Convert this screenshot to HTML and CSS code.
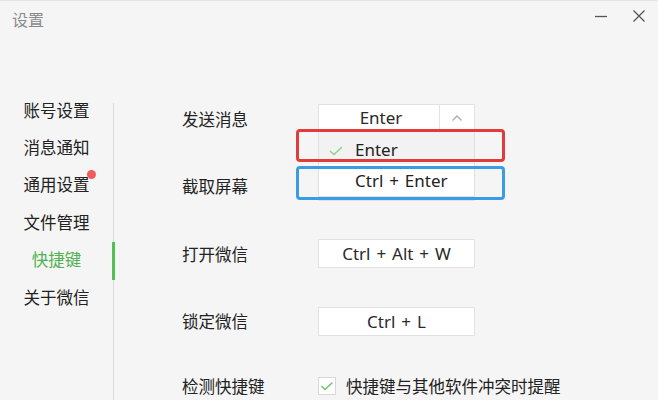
FILE: index.html
```html
<!DOCTYPE html>
<html lang="zh-CN">
<head>
<meta charset="utf-8">
<title>设置</title>
<link rel="stylesheet" href="styles.css">
</head>
<body>
<div class="window">
  <header class="titlebar">
    <div class="title">设置</div>
    <div class="controls">
      <svg class="ctl" width="14" height="14" viewBox="0 0 14 14"><path d="M1 7.5H13" stroke="#555" stroke-width="1.3"/></svg>
      <svg class="ctl" width="14" height="14" viewBox="0 0 14 14"><path d="M1.5 1.5L12.5 12.5M12.5 1.5L1.5 12.5" stroke="#555" stroke-width="1.3"/></svg>
    </div>
  </header>
  <div class="main">
    <nav class="sidebar">
      <div class="nav-item"><span>账号设置</span></div>
      <div class="nav-item"><span>消息通知</span></div>
      <div class="nav-item"><span class="has-dot">通用设置<i class="dot"></i></span></div>
      <div class="nav-item"><span>文件管理</span></div>
      <div class="nav-item active"><span>快捷键</span></div>
      <div class="nav-item"><span>关于微信</span></div>
    </nav>
    <div class="divider"></div>
    <section class="content">
      <div class="row">
        <div class="label">发送消息</div>
        <div class="select">
          <div class="select-value">Enter</div>
          <div class="select-arrow">
            <svg width="12" height="8" viewBox="0 0 12 8"><path d="M1.5 6.5L6 2L10.5 6.5" fill="none" stroke="#aaa" stroke-width="1.3"/></svg>
          </div>
          <div class="dropdown">
            <div class="option selected">
              <svg class="opt-check" width="14" height="10" viewBox="0 0 14 10"><path d="M1 5L5 8.5L13 1" fill="none" stroke="#8ccf8c" stroke-width="1.3"/></svg>
              <span>Enter</span>
            </div>
            <div class="option"><span>Ctrl + Enter</span></div>
          </div>
          <div class="mark mark-red"></div>
          <div class="mark mark-blue"></div>
        </div>
      </div>
      <div class="row">
        <div class="label">截取屏幕</div>
        <div class="keybox"></div>
      </div>
      <div class="row">
        <div class="label">打开微信</div>
        <div class="keybox">Ctrl + Alt + W</div>
      </div>
      <div class="row">
        <div class="label">锁定微信</div>
        <div class="keybox">Ctrl + L</div>
      </div>
      <div class="row row-check">
        <div class="label">检测快捷键</div>
        <div class="check-wrap">
          <span class="checkbox">
            <svg width="14" height="10" viewBox="0 0 14 10"><path d="M1.5 5L5 8.5L12.5 1.5" fill="none" stroke="#6cc36c" stroke-width="1.4"/></svg>
          </span>
          <span class="check-text">快捷键与其他软件冲突时提醒</span>
        </div>
      </div>
    </section>
  </div>
</div>
</body>
</html>
```
FILE: styles.css
```css
* { box-sizing: border-box; }
html, body { margin: 0; padding: 0; }
body {
  background: #f5f5f5;
  font-family: "Noto Sans", "Noto Sans CJK SC", sans-serif;
  color: #333;
  width: 658px;
  height: 400px;
  overflow: hidden;
}
.window {
  height: 400px;
  display: flex;
  flex-direction: column;
  border-top: 1px solid #e4e4e4;
}
.titlebar {
  height: 37px;
  display: flex;
  justify-content: space-between;
  align-items: flex-start;
  padding: 0 12px 0 12px;
}
.title {
  font-family: "Noto Sans CJK SC", sans-serif;
  font-size: 16px;
  line-height: 20px;
  margin-top: 8px;
  color: #8a8a8a;
}
.controls {
  display: flex;
  gap: 24px;
  margin-top: 8px;
}
.ctl { display: block; }
.main {
  flex: 1;
  display: flex;
}
.sidebar {
  width: 113px;
  padding-top: 54px;
  display: flex;
  flex-direction: column;
}
.nav-item {
  height: 37.4px;
  display: flex;
  align-items: center;
  justify-content: center;
  font-family: "Noto Sans CJK SC", sans-serif;
  font-size: 16.5px;
  color: #222;
  position: relative;
}
.nav-item span { line-height: 20px; }
.nav-item.active { color: #4fb24f; }
.nav-item.active::after {
  content: "";
  position: absolute;
  right: -2px;
  top: 1px;
  width: 3px;
  height: 38px;
  background: #52c052;
}
.has-dot { position: relative; }
.dot {
  position: absolute;
  right: -6px;
  top: -4px;
  width: 9px;
  height: 9px;
  border-radius: 50%;
  background: #f25b5b;
}
.divider {
  width: 1px;
  background: #dcdcdc;
  margin-top: 66px;
}
.content {
  flex: 1;
  padding-top: 67px;
  padding-left: 68px;
  display: flex;
  flex-direction: column;
  gap: 38.5px;
}
.row {
  display: flex;
  align-items: center;
  height: 29px;
}
.row-check { margin-top: -3px; }
.label {
  width: 136px;
  font-family: "Noto Sans CJK SC", sans-serif;
  font-size: 16.5px;
  color: #222;
}
.keybox, .select {
  width: 157px;
  height: 29px;
  background: #fff;
  border: 1px solid #e2e2e2;
  font-family: "Noto Sans", sans-serif;
  font-size: 17px;
  word-spacing: 1.5px;
  color: #2a2a2a;
}
.keybox {
  display: flex;
  align-items: center;
  justify-content: center;
}
.select {
  display: flex;
  position: relative;
  height: 27px;
  margin-top: -2px;
}
.select-value {
  flex: 1;
  display: flex;
  align-items: center;
  justify-content: center;
  padding-left: 4px;
}
.select-arrow {
  width: 35px;
  border-left: 1px solid #e2e2e2;
  display: flex;
  align-items: center;
  justify-content: center;
}
.dropdown {
  position: absolute;
  left: -1px;
  top: 25px;
  width: 157px;
  background: #fff;
  border: 1px solid #e0e0e0;
  z-index: 2;
}
.option {
  height: 32px;
  display: flex;
  align-items: center;
  padding-left: 36px;
  position: relative;
  font-size: 17px;
  color: #222;
}
.option.selected {
  background: #f2f2f2;
  height: 33px;
  padding-top: 4px;
}
.opt-check {
  position: absolute;
  left: 10px;
  top: 15px;
}
.mark {
  position: absolute;
  left: -23px;
  width: 209px;
  border: 3px solid;
  border-radius: 4px;
  z-index: 3;
}
.mark-red {
  top: 24px;
  height: 33px;
  border-color: #e23b3b;
}
.mark-blue {
  top: 61px;
  height: 34px;
  border-color: #3a9de3;
}
.check-wrap {
  display: flex;
  align-items: center;
  gap: 10px;
}
.checkbox {
  width: 18px;
  height: 18px;
  background: #fff;
  border: 1px solid #d8d8d8;
  display: flex;
  align-items: center;
  justify-content: center;
}
.check-text {
  font-family: "Noto Sans CJK SC", sans-serif;
  font-size: 16.5px;
  color: #222;
}
```
